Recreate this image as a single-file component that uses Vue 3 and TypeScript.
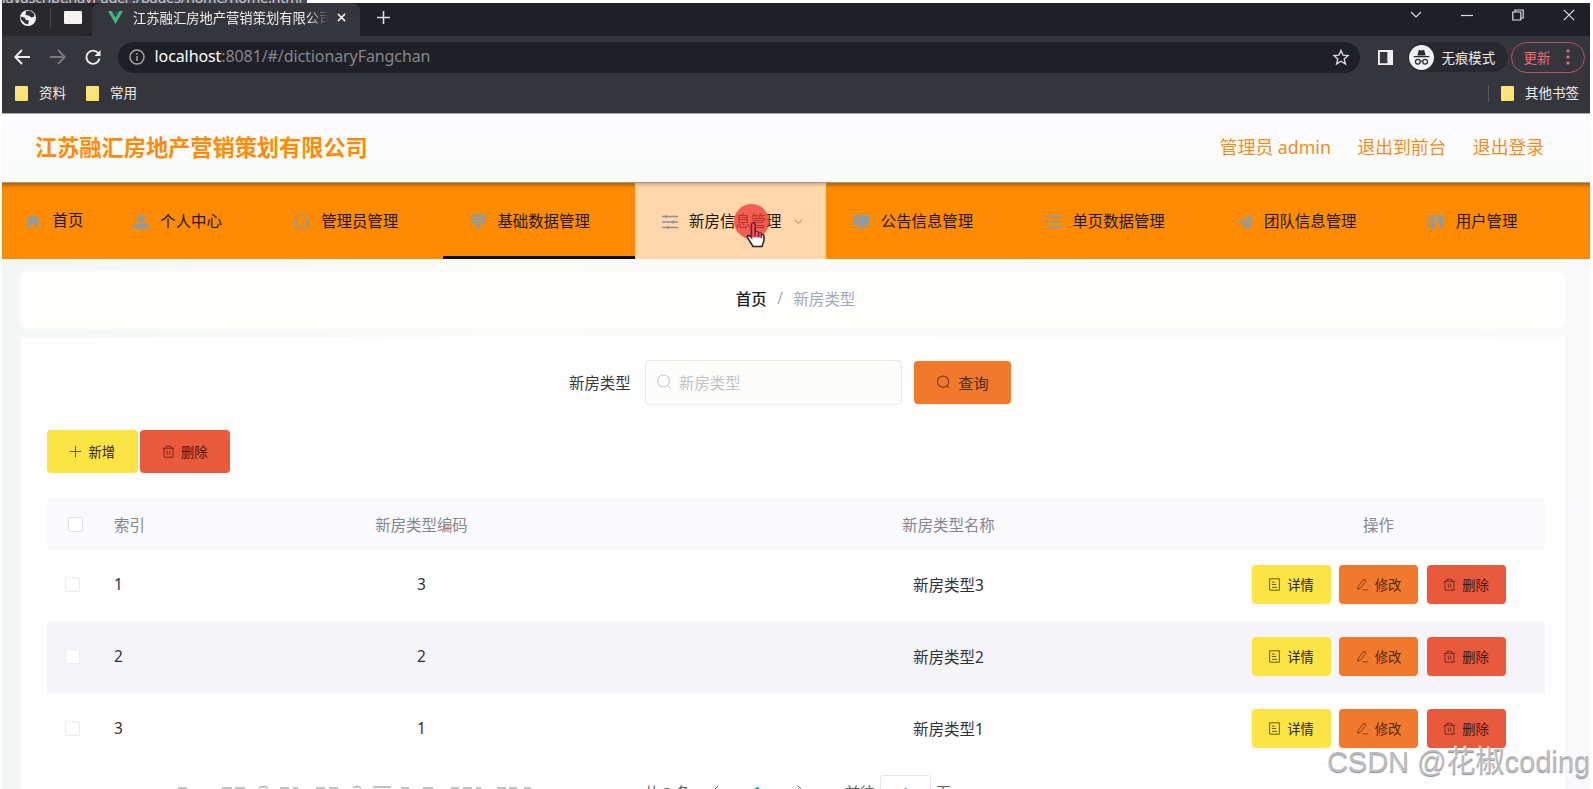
<script setup lang="ts">
interface MenuItem { label: string; icon: string; state?: string }

const menu: MenuItem[] = [
  { label: '首页', icon: 'home', state: 'home' },
  { label: '个人中心', icon: 'user' },
  { label: '管理员管理', icon: 'service' },
  { label: '基础数据管理', icon: 'data', state: 'active' },
  { label: '新房信息管理', icon: 'sliders', state: 'hover' },
  { label: '公告信息管理', icon: 'monitor' },
  { label: '单页数据管理', icon: 'list' },
  { label: '团队信息管理', icon: 'plane' },
  { label: '用户管理', icon: 'books' },
]

const rows = [
  { index: 1, code: 3, name: '新房类型3' },
  { index: 2, code: 2, name: '新房类型2' },
  { index: 3, code: 1, name: '新房类型1' },
]
</script>

<template>
  <div class="screen">
    <div class="sliver"><span>javascript:navPage('./pages/home/home.html')</span></div>

    <div class="browser">
      <div class="tabs">
        <div class="pinned">
          <svg class="globe" viewBox="0 0 18 18"><circle cx="9" cy="9" r="8" fill="#f4f4f4" /><path d="M1.500 7.500l4 1 1.500 2.500 3 .5-1 4-3-1-4-4zM7 2l4-.5 4 3 .5 3-3 1-3-2-3-.5z" fill="#303136" /></svg>
          <i class="tab-sep"></i>
          <i class="blank-page"></i>
        </div>
        <div class="tab">
          <svg class="vue" viewBox="0 0 18 16"><path d="M1 1h4l4 7 4-7h4L9 15z" fill="#41b883" /><path d="M5 1h3l1 2 1-2h3L9 8z" fill="#34495e" /></svg>
          <span class="tab-title">江苏融汇房地产营销策划有限公司</span>
          <svg class="x" viewBox="0 0 10 10"><path d="M1 1l8 8M9 1L1 9" /></svg>
        </div>
        <svg class="plus" viewBox="0 0 14 14"><path d="M7 0v14M0 7h14" /></svg>
        <div class="win">
          <svg viewBox="0 0 12 12"><path d="M1 3l5 5 5-5" /></svg>
          <svg viewBox="0 0 12 12"><path d="M0 6.500h12" /></svg>
          <svg viewBox="0 0 12 12"><path d="M.8 3h8v8h-8zM3 3V1h8.200v8H9" /></svg>
          <svg viewBox="0 0 12 12"><path d="M.8.800l10.400 10.400M11.200.800L.8 11.200" /></svg>
        </div>
      </div>

      <div class="toolbar">
        <svg class="nav" viewBox="0 0 16 16"><path d="M16 8H1.500M8 1L1.300 8 8 15" /></svg>
        <svg class="nav dim" viewBox="0 0 16 16"><path d="M0 8h14.500M8 1l6.700 7L8 15" /></svg>
        <svg class="nav" viewBox="0 0 16 16"><path d="M13.500 4.500A6.600 6.600 0 1 0 14.500 9.500" /><path d="M15.500 1v6h-6z" fill="#eee" stroke="none" /></svg>
        <div class="omnibox">
          <svg class="info" viewBox="0 0 16 16"><circle cx="8" cy="8" r="7" /><path d="M8 7v5M8 4v1.700" /></svg>
          <span class="url"><b>localhost</b>:8081/#/dictionaryFangchan</span>
          <svg class="star" viewBox="0 0 16 16"><path d="M8 1.500l2 4.600 5 .5-3.800 3.300 1.200 5L8 12.200l-4.400 2.700 1.200-5L1 6.600l5-.5z" /></svg>
        </div>
        <svg class="panel" viewBox="0 0 16 16"><path d="M0 0h16v16H0zM2 2v12h8V2z" fill="#f1f1f4" fill-rule="evenodd" /></svg>
        <div class="incog">
          <svg viewBox="0 0 24 24"><circle cx="12" cy="12" r="12" fill="#eff1f5" /><path d="M8 10l1.500-5.500 2.500.8 2.500-.8L16 10zM4.500 10.500h15v1.300h-15z" fill="#292a30" /><g fill="none" stroke="#292a30" stroke-width="1.200"><circle cx="8.500" cy="16" r="2.300" /><circle cx="15.500" cy="16" r="2.300" /><path d="M11 15.500h2" /></g></svg>
          <span>无痕模式</span>
        </div>
        <div class="update"><span>更新</span><svg viewBox="0 0 4 16"><circle cx="2" cy="2" r="1.600" /><circle cx="2" cy="8" r="1.600" /><circle cx="2" cy="14" r="1.600" /></svg></div>
      </div>

      <div class="bookmarks">
        <i class="folder"></i><span>资料</span>
        <i class="folder"></i><span>常用</span>
        <div class="others"><i class="folder"></i><span>其他书签</span></div>
      </div>
    </div>

    <header class="head">
      <h1>江苏融汇房地产营销策划有限公司</h1>
      <div class="links"><span>管理员 admin</span><span>退出到前台</span><span>退出登录</span></div>
    </header>

    <nav class="menu">
      <div v-for="m in menu" :key="m.label" class="item" :class="m.state">
        <svg class="mi" viewBox="0 0 16 16">
          <path v-if="m.icon === 'home'" d="M8 1L0 8.500h2.500V15H6v-4h4v4h3.500V8.500H16z" />
          <g v-else-if="m.icon === 'user'"><circle cx="8" cy="5" r="4" /><path d="M0 15v-2q0-3 3-3h10q3 0 3 3v2z" /></g>
          <path v-else-if="m.icon === 'service'" class="line" d="M3 9V6a5 5 0 0 1 10 0v3M1 7h2v5H1zM13 7h2v5h-2zM13 12l-3 3-4-2-4 2" />
          <path v-else-if="m.icon === 'data'" d="M1 0h14v10h-4l-3 6-3-6H1zM3 3v1h10V3zM3 6v1h10V6z" fill-rule="evenodd" />
          <path v-else-if="m.icon === 'sliders'" class="line" d="M0 2.500h16M0 8h16M0 13.500h16M4 1v3M11 6.500v3M6 12v3" />
          <path v-else-if="m.icon === 'monitor'" d="M0 1h16v11H0zM4 13.500h8V15H4z" />
          <path v-else-if="m.icon === 'list'" d="M0 1h3v3H0zM5 1h11v2H5zM0 6h3v3H0zM5 7h11v2H5zM0 12h3v2H0zM5 12h11v2H5z" />
          <path v-else-if="m.icon === 'plane'" d="M16 0L0 8l4 2 9-7-7 8v5l3-3 4 2z" />
          <path v-else d="M0 1h2v14H0zM3 1h4v14H3zM8 2l3-1 5 13-3 1zM11 1h5v13z" />
        </svg>
        <span>{{ m.label }}</span>
        <svg v-if="m.icon !== 'home'" class="chev" viewBox="0 0 12 12"><path d="M2 4l4 4 4-4" /></svg>
        <template v-if="m.state === 'hover'">
          <i class="click-dot"></i>
          <svg class="hand" viewBox="0 0 20 26"><path d="M6 14V3q0-2 1.700-2T9.500 3v7q3-1 4 1 2.500-.5 3 1.500 2-.2 2 2v4l-2 6H7.500l-5-8q-1.500-2.500.5-3 1.500 0 3 2z" fill="#fff" stroke="#222" stroke-width="1.500" /><path d="M6 15V3q0-2 1.700-2T9.500 3v7q3-1 4 1 2.500-.5 3 1.500v3H6z" fill="#ea5261" /><path d="M6 14V3q0-2 1.700-2T9.500 3v11M13 11v4M16 12v4" fill="none" stroke="#87192b" stroke-width="1.200" /></svg>
        </template>
      </div>
    </nav>

    <main class="page">
      <div class="crumbs"><b>首页</b><i>/</i><span>新房类型</span></div>

      <section class="card">
        <div class="search">
          <label>新房类型</label>
          <div class="input">
            <svg viewBox="0 0 16 16"><circle cx="7.500" cy="7" r="6" /><path d="M11.500 11.500l3 3" /></svg>
            <span>新房类型</span>
          </div>
          <div class="btn query">
            <svg viewBox="0 0 16 16"><circle cx="7.500" cy="7" r="6" /><path d="M11.500 11.500l2 2" /></svg>查询
          </div>
        </div>

        <div class="actions">
          <div class="btn yellow"><svg viewBox="0 0 16 16"><path d="M8 1v14M1 8h14" /></svg>新增</div>
          <div class="btn red"><svg viewBox="0 0 16 16"><path d="M1 4h14M5 4V1.500h6V4M2.500 4v11h11V4M6.500 7v5M9.500 7v5" /></svg>删除</div>
        </div>

        <div class="table">
          <div class="tr th">
            <div><i class="check"></i></div><div class="idx">索引</div><div>新房类型编码</div><div>新房类型名称</div><div>操作</div>
          </div>
          <div v-for="r in rows" :key="r.index" class="tr" :class="{ striped: r.index === 2 }">
            <div><i class="check"></i></div>
            <div class="idx">{{ r.index }}</div>
            <div>{{ r.code }}</div>
            <div>{{ r.name }}</div>
            <div class="ops">
              <div class="btn yellow"><svg viewBox="0 0 16 16"><path d="M2 1h12v14H2zM5 5h3M5 8h5M5 11.500h6" /></svg>详情</div>
              <div class="btn orange"><svg viewBox="0 0 16 16"><path d="M3 10l6-8q3-1 3 2l-6 8-4 2zM8 14.500h7" /></svg>修改</div>
              <div class="btn red"><svg viewBox="0 0 16 16"><path d="M1 4h14M5 4V1.500h6V4M2.500 4v11h11V4M6.500 7v5M9.500 7v5" /></svg>删除</div>
            </div>
          </div>
        </div>

        <div class="pager">
          <span class="total">共 3 条</span>
          <svg viewBox="0 0 12 12"><path d="M8 1L3 6l5 5" /></svg>
          <b>1</b>
          <svg viewBox="0 0 12 12"><path d="M4 1l5 5-5 5" /></svg>
          <span class="goto">前往</span><span class="num">1</span><span>页</span>
        </div>
      </section>
    </main>
    <svg class="caption-edge" viewBox="0 0 360 4"><path d="M3 3h9M47 3h10M60 3h10M84 3q5-3 9 0M105 3h9M118 3h5M141 3h9M154 3h9M178 3q4-3 8 0M198 2h18M226 3h8M248 3h10M276 3h8M288 3h9M301 3h5M322 3h9M334 3h8M349 3h7" /></svg>
    <div class="watermark">CSDN @花椒coding</div>
  </div>
</template>

<style>
body { margin: 0; overflow: hidden; background: #fff; }
</style>

<style scoped>
* { box-sizing: border-box; }
.screen { position: relative; width: 1593px; height: 789px; overflow: hidden; padding: 0 3px 0 2px; background: #fff; font-family: "Noto Sans", "Noto Sans CJK SC", sans-serif; font-size: 15.4px; color: #222; }
svg { flex: none; display: block; fill: none; overflow: visible; }
i { font-style: normal; }
.sliver { width: 305px; height: 3px; overflow: hidden; background: #494a52; color: #c8c8cc; font-size: 14.500px; }
.sliver span { display: block; margin-top: -13px; line-height: 20px; letter-spacing: -.25px; white-space: nowrap; }

.browser { height: 111px; background: #35363c; border-bottom: 1px solid #a8a8ac; }
.tabs { height: 33px; display: flex; align-items: center; background: #1d2026; }
.pinned { width: 90px; height: 33px; display: flex; align-items: center; padding: 0 0 4px 17px; background: #29292d; border-radius: 0 0 8px 0; }
.globe { width: 18px; height: 18px; }
.tab-sep { width: 1px; height: 20px; margin-left: 13px; background: #4a4a4e; }
.blank-page { width: 18px; height: 13px; margin-left: 13px; background: #f5f3f2; border-radius: 1px; }
.tab { width: 268px; height: 33px; display: flex; align-items: center; padding: 0 0 4px 15px; background: #35353c; border-radius: 8px 8px 0 0; }
.vue { width: 17px; height: 15px; }
.tab-title { width: 195px; margin-left: 9px; overflow: hidden; white-space: nowrap; font-size: 13.300px; line-height: 20px; color: #f0f0f2; -webkit-mask-image: linear-gradient(90deg, #000 90%, transparent); mask-image: linear-gradient(90deg, #000 90%, transparent); }
.x { width: 9px; height: 9px; margin-left: 9px; stroke: #eee; stroke-width: 1.700; }
.plus { width: 13px; height: 13px; margin: 0 0 4px 17px; stroke: #ddd; stroke-width: 1.700; }
.win { margin: 0 15px 10px auto; display: flex; gap: 39px; }
.win svg { width: 12px; height: 12px; stroke: #ddd; stroke-width: 1.200; }
.toolbar { height: 42px; display: flex; align-items: center; padding-left: 12px; }
.nav { width: 16px; height: 16px; margin-right: 19.500px; stroke: #eee; stroke-width: 1.900; }
.nav.dim { stroke: #77777b; }
.omnibox { width: 1242px; height: 31px; margin-left: -3px; border-radius: 16px; background: #1f2026; display: flex; align-items: center; padding: 0 11px; }
.info { width: 16px; height: 16px; stroke: #aaa; stroke-width: 1.400; }
.url { margin: -2px 0 0 10px; font-size: 16px; color: #85868b; letter-spacing: -.09px; white-space: nowrap; }
.url b { font-weight: 400; color: #fff; }
.star { width: 16px; height: 16px; margin-left: auto; stroke: #d5d5da; stroke-width: 1.400; }
.panel { width: 15px; height: 15px; margin-left: 18px; }
.incog { width: 100px; height: 30px; margin-left: 15px; display: flex; align-items: center; border-radius: 15px; background: #27292e; color: #eee; font-size: 13.400px; white-space: nowrap; gap: 8px; padding-left: 1px; }
.incog svg { width: 25px; height: 25px; }
.incog span, .update span { margin-top: -1px; }
.update { width: 74px; height: 31px; margin-left: 3px; border: 1.500px solid #bd5265; border-radius: 16px; color: #f36c78; font-size: 13.400px; display: flex; align-items: center; padding-left: 12px; }
.update svg { width: 4px; height: 16px; margin-left: 16px; fill: #f36c78; }
.bookmarks { height: 35px; display: flex; align-items: center; color: #eee; font-size: 13.500px; padding: 0 11px 5px 13px; }
.folder { width: 13px; height: 15px; margin-right: 11px; background: linear-gradient(135deg, #f8e58b, #ffe15e); border-radius: 1px; }
.bookmarks > span { margin: -2px 20px 0 0; }
.others { margin-left: auto; display: flex; align-items: center; border-left: 1px solid #57575c; padding-left: 12px; height: 17px; }
.others span { margin-top: -2px; }

.head { height: 68px; display: flex; align-items: center; justify-content: space-between; padding: 0 46px 1px 33px; background: linear-gradient(#fdfcff, #f9fbfa); }
h1 { margin: 0; font-size: 22.190px; line-height: 30px; font-weight: 700; color: #ff8b05; }
.links { display: flex; gap: 26.500px; font-size: 17.800px; color: #f38c1b; line-height: 26px; white-space: nowrap; margin-top: -1px; }

.menu { height: 77px; width: 1588px; margin: 0; display: flex; background: #ff8b00; box-shadow: inset 0 5px 4px -3px #9a5c1c, 0 1px 0 #ffe3bf; border-top: 1px solid #ab9781; }
.item { position: relative; display: flex; align-items: center; padding: 1px 22px 0 27px; white-space: nowrap; color: #201508; }
.item.home { padding: 0 22.500px 1px 23px; }
.item span { margin-left: 11.500px; line-height: 22px; }
.item.active { box-shadow: inset 0 -3px #111; }
.item.hover { background: #ffd7ab; box-shadow: inset 0 4px 4px -3px #b9987a; }
.mi { width: 16px; height: 16px; fill: #959b98; }
.item.hover .mi { fill: none; }
.line { fill: none; stroke: #999a91; stroke-width: 1.300; }
.hover .line { stroke: #8d8f9c; }
.chev { width: 11px; height: 11px; margin-left: 11.800px; stroke: #f58a3e; stroke-width: 1.200; }
.hover .chev { stroke: #c39a6c; }
.click-dot { position: absolute; left: 99px; top: 21px; width: 35px; height: 35px; border-radius: 50%; background: rgba(239, 55, 55, .76); }
.hand { position: absolute; left: 110px; top: 39px; width: 21px; height: 26px; }

.page { height: 531px; padding: 13px 25px 0 19px; background: linear-gradient(90deg, #f2f7f4 0%, #fbfbf8 30%, #f9f9fb 100%); }
.crumbs { height: 56px; display: flex; align-items: center; justify-content: center; gap: 6px; padding: 0 0 4px 5px; border-radius: 7px; background: #fefefd; box-shadow: 0 0 5px #fff; }
.crumbs b { font-weight: 500; color: #202124; }
.crumbs i { color: #a9adb8; width: 15px; text-align: center; }
.crumbs span { color: #a2a7b5; }
.card { height: 470px; margin-top: 9px; padding: 22px 20px 0 26px; background: #fefeff; }
.search { height: 46px; display: flex; align-items: center; padding-left: 522px; }
.search label { width: 76px; color: #37383b; }
.input { width: 257px; height: 45px; display: flex; align-items: center; padding-left: 10px; gap: 7px; background: #fcfcfa; border: 1px solid #e9e9e8; border-radius: 4px; color: #c2c3c4; }
.input svg { width: 16px; height: 16px; stroke: #c2c3c7; stroke-width: 1; }
.btn { display: flex; align-items: center; justify-content: center; gap: 6px; border-radius: 4px; font-size: 13.300px; color: #2f2105; white-space: nowrap; }
.btn svg { width: 13px; height: 13px; stroke: currentColor; stroke-width: 1.100; opacity: .8; }
.query { width: 97px; height: 43px; margin-left: 12px; font-size: 15.200px; gap: 7px; background: #f0792c; color: #4a2b10; }
.query svg { width: 15px; height: 15px; }
.yellow { background: #fde445; }
.orange { background: #f0792c; color: #4e2810; }
.red { background: #e9593b; color: #461610; }
.actions { display: flex; gap: 2px; margin-top: 25px; }
.actions .btn { width: 90.500px; height: 43px; }
.table { margin-top: 25px; width: 1498px; }
.tr { height: 71.800px; display: grid; grid-template-columns: 54px 57px 527px 527px 333px; align-items: center; text-align: center; border-bottom: 1px solid #fafafd; color: #303136; padding-bottom: 1px; }
.th { height: 52px; background: #fafafd; color: #85868d; padding: 1px 0 0; }
.striped { background: #f5f5f9; }
.idx { text-align: left; padding-left: 13px; white-space: nowrap; }
.check { display: block; width: 15px; height: 15px; margin-left: 18px; background: #fff; border: 1px solid #ececf1; border-radius: 2px; }
.th .check { margin-left: 21px; border-color: #e2e2e8; }
.ops { display: flex; justify-content: center; gap: 8.500px; }
.ops .btn { width: 79px; height: 39px; }
.pager { height: 38px; margin-top: 7px; padding-left: 597px; display: flex; align-items: center; color: #606266; font-size: 15px; white-space: nowrap; }
.pager svg { width: 12px; height: 12px; stroke: #606266; margin: 0 14px 0 20px; }
.pager b { color: #20b693; font-weight: 700; margin: 0 13px 0 16px; }
.goto { margin-left: 25px; }
.num { width: 51px; height: 32px; line-height: 32px; text-align: center; border: 1px solid #e5e5eb; border-radius: 3px; margin: 0 5px; }
.caption-edge { position: absolute; left: 175px; bottom: 0; width: 360px; height: 4px; stroke: #8c8c90; stroke-width: 1.500; opacity: .7; filter: blur(.5px); }
.watermark { position: absolute; right: 3px; top: 741px; font-family: "Liberation Sans", "Noto Sans CJK SC", sans-serif; font-size: 29px; line-height: 42px; color: #b9bbc0; text-shadow: -1px -1px #fff, 0 1px 1px #8d8e94; white-space: nowrap; }
</style>
